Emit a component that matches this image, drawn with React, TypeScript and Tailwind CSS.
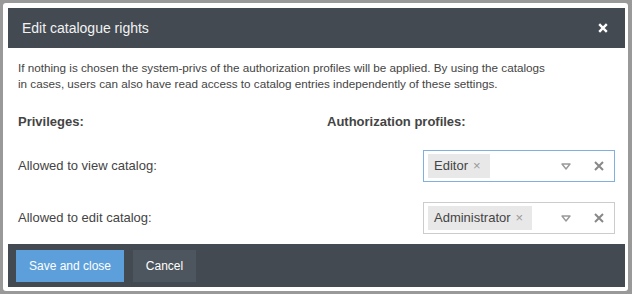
import React from "react";

const Chip: React.FC<{ label: string }> = ({ label }) => (
  <span className="flex items-center h-[24px] bg-[#e8e8e8] pl-[6px] pr-[9px] text-[13px] text-[#444]">
    {label}
    <span className="ml-[5px] text-[13px] text-[#999]">×</span>
  </span>
);

const ProfileSelect: React.FC<{ value: string; focused?: boolean }> = ({ value, focused }) => (
  <div
    className={`flex items-center w-[192px] h-[32px] pl-[4px] bg-white border ${
      focused ? "border-[#7fb0e0]" : "border-[#ccc]"
    }`}
  >
    <Chip label={value} />
    <div className="flex-1" />
    <svg width="10" height="7" viewBox="0 0 10 7" className="mr-[23px]">
      <path d="M1 1 H9 L5 6 Z" fill="none" stroke="#999" strokeWidth="1.4" strokeLinejoin="round" />
    </svg>
    <svg width="10" height="10" viewBox="0 0 10 10" className="mr-[10px]">
      <path d="M1 1 L9 9 M9 1 L1 9" stroke="#888" strokeWidth="2" />
    </svg>
  </div>
);

export default function App() {
  return (
    <div className="w-[632px] h-[294px] bg-[#999] p-[3px] font-[family-name:Liberation_Sans,Arial,sans-serif]">
      <div className="h-[288px] w-[625px] bg-white rounded-[3px] pt-[5px] pb-[4px] pl-[5px] pr-[3px] flex flex-col">
        <div className="h-[40px] bg-[#434a52] flex items-center justify-between pl-[14px] pr-[17px]">
          <span className="text-[14px] text-[#f2f2f2]">Edit catalogue rights</span>
          <svg width="10" height="10" viewBox="0 0 10 10">
            <path d="M1.2 1.2 L8.8 8.8 M8.8 1.2 L1.2 8.8" stroke="#fff" strokeWidth="2.4" />
          </svg>
        </div>

        <div className="flex-1 px-[10px] pt-[12px] text-[13px] text-[#444]">
          <p className="text-[11.7px] leading-[16px]">
            If nothing is chosen the system-privs of the authorization profiles will be applied. By using the catalogs
            <br />
            in cases, users can also have read access to catalog entries independently of these settings.
          </p>

          <div className="grid grid-cols-[309px_1fr] mt-[20px] leading-[20px] font-bold">
            <span>Privileges:</span>
            <span>Authorization profiles:</span>
          </div>

          <div className="flex items-center justify-between mt-[18px]">
            <span>Allowed to view catalog:</span>
            <ProfileSelect value="Editor" focused />
          </div>

          <div className="flex items-center justify-between mt-[20px]">
            <span>Allowed to edit catalog:</span>
            <ProfileSelect value="Administrator" />
          </div>
        </div>

        <div className="h-[43px] bg-[#434a52] flex items-center gap-[9px] pl-[8px]">
          <button className="h-[32px] w-[108px] bg-[#5d9fdb] text-white text-[12px]">Save and close</button>
          <button className="h-[32px] w-[63px] bg-[#4d565e] text-white text-[12px]">Cancel</button>
        </div>
      </div>
    </div>
  );
}
